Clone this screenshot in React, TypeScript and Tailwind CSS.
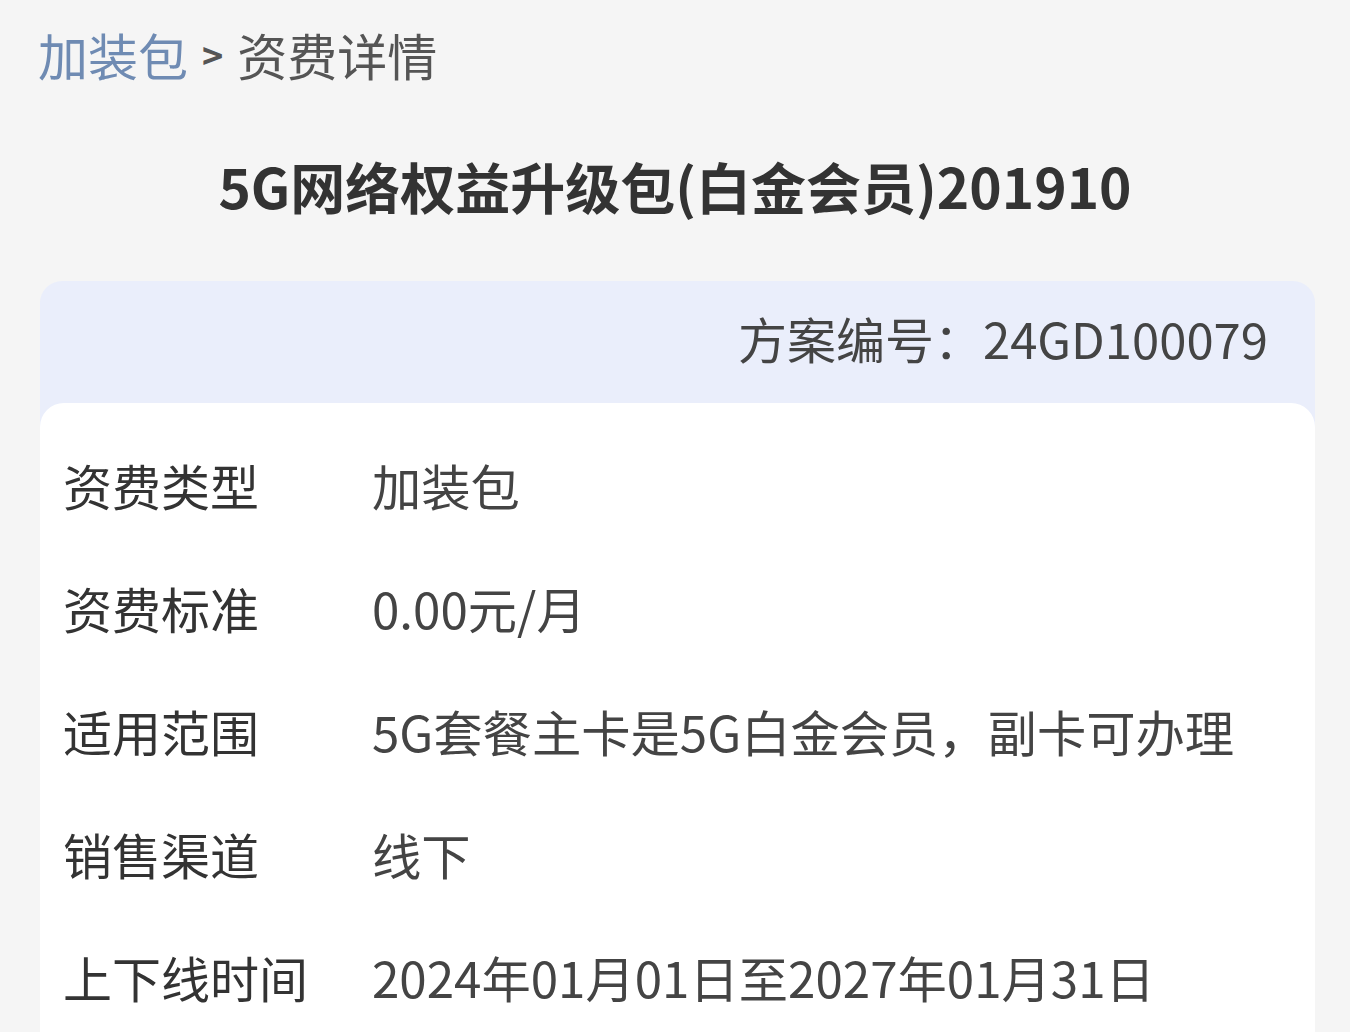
const rows = [
  { label: "资费类型", value: "加装包" },
  { label: "资费标准", value: "0.00元/月" },
  { label: "适用范围", value: "5G套餐主卡是5G白金会员，副卡可办理" },
  { label: "销售渠道", value: "线下" },
  { label: "上下线时间", value: "2024年01月01日至2027年01月31日" },
];

export default function App() {
  return (
    <div
      className="min-h-[1032px] bg-[#f5f5f5] overflow-hidden"
      style={{ fontFamily: '"Noto Sans CJK SC", "Noto Sans", sans-serif' }}
    >
      {/* breadcrumb */}
      <div className="pt-[23px] px-[38px] text-[50px] leading-[62px] flex items-center gap-[14px]">
        <span className="text-[#6f8bb3]">加装包</span>
        <span className="text-[#555] text-[36px] font-bold">&gt;</span>
        <span className="text-[#555]">资费详情</span>
      </div>

      <h1 className="mt-[66px] text-center text-[55px] leading-[68px] font-bold text-[#333]">
        5G网络权益升级包(白金会员)201910
      </h1>

      <div className="mt-[62px] ml-[40px] mr-[35px] rounded-t-[22px] bg-[#eaeefb]">
        <div className="h-[122px] flex items-center justify-end pr-[47px] pb-[8px] text-[49px] text-[#444]">
          方案编号：24GD100079
        </div>
        <div className="bg-white rounded-t-[24px] pt-[20px] px-[23px] pb-[40px]">
          {rows.map((row) => (
            <div key={row.label} className="h-[123px] flex items-center text-[49px]">
              <span className="w-[309px] shrink-0 text-[#333]">{row.label}</span>
              <span className="text-[#444] text-[49.3px]">{row.value}</span>
            </div>
          ))}
        </div>
      </div>
    </div>
  );
}
